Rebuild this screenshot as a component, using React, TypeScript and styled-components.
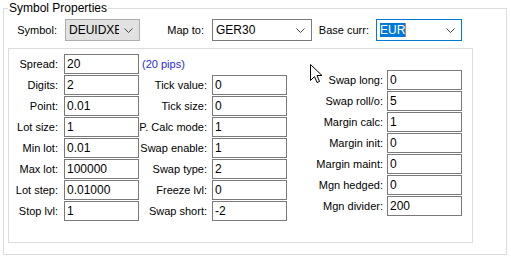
import styled, { createGlobalStyle } from "styled-components";

const GlobalStyle = createGlobalStyle`
  html, body {
    margin: 0;
    padding: 0;
    background: #ffffff;
  }
  body {
    font-family: "Liberation Sans", Arial, sans-serif;
    font-size: 11px;
    color: #000000;
  }
`;

const Page = styled.div`
  position: relative;
  width: 511px;
  height: 256px;
  padding: 8px 0 0 3px;
  box-sizing: border-box;
`;

const GroupBox = styled.div`
  position: relative;
  width: 504px;
  height: 247px;
  border: 1px solid #dcdcdc;
  box-sizing: border-box;
  padding: 10px 0 0 0;
`;

const Legend = styled.span`
  position: absolute;
  top: -8px;
  left: 4px;
  padding: 0 1px;
  background: #ffffff;
  font-size: 12px;
  line-height: 14px;
`;

const TopRow = styled.div`
  display: grid;
  grid-template-columns: 61px 75px 72px 100px 64px 86px;
  align-items: center;
  height: 22px;
`;

const Label = styled.div<{ $pad?: number }>`
  text-align: right;
  padding-right: ${({ $pad }) => $pad ?? 7}px;
  white-space: nowrap;
  line-height: 14px;
`;

const Combo = styled.div<{ $variant?: "gray" | "focused" | "plain" }>`
  position: relative;
  height: 22px;
  box-sizing: border-box;
  display: flex;
  align-items: center;
  padding-left: 3px;
  overflow: hidden;
  white-space: nowrap;
  font-size: 12px;
  background: ${({ $variant }) => ($variant === "gray" ? "#e1e1e1" : "#ffffff")};
  border: 1px solid
    ${({ $variant }) =>
      $variant === "gray" ? "#adadad" : $variant === "focused" ? "#0078d7" : "#7a7a7a"};
`;

const ComboText = styled.span<{ $clip?: boolean }>`
  flex: 1;
  overflow: hidden;
  ${({ $clip }) => ($clip ? "margin-right: 20px;" : "")}
`;

const Selected = styled.span`
  background: #0078d7;
  color: #ffffff;
  padding: 1px 0;
  border-right: 1px solid #e08040;
`;

const Chevron = styled.svg`
  position: absolute;
  right: 6px;
  top: 8px;
`;

const Panel = styled.div`
  margin: 7px 0 0 4px;
  width: 465px;
  height: 195px;
  border: 1px solid #dcdcdc;
  box-sizing: border-box;
  display: flex;
  align-items: flex-start;
`;

const Column = styled.div<{ $top: number }>`
  display: flex;
  flex-direction: column;
  gap: 1px;
  margin-top: ${({ $top }) => $top}px;
`;

const FieldRow = styled.div<{ $labelWidth: number }>`
  position: relative;
  display: grid;
  grid-template-columns: ${({ $labelWidth }) => $labelWidth}px 75px;
  align-items: center;
  height: 20px;
`;

const Input = styled.div`
  height: 20px;
  box-sizing: border-box;
  border: 1px solid #7a7a7a;
  padding-left: 2px;
  display: flex;
  align-items: center;
  font-size: 12px;
`;

const Hint = styled.span`
  position: absolute;
  left: 78px;
  top: 4px;
  color: #2a2ad8;
  font-size: 11px;
  white-space: nowrap;
`;

const Cursor = styled.svg`
  position: absolute;
  left: 310px;
  top: 64px;
`;

type Field = [string, string];

const leftFields: Field[] = [
  ["Spread:", "20"],
  ["Digits:", "2"],
  ["Point:", "0.01"],
  ["Lot size:", "1"],
  ["Min lot:", "0.01"],
  ["Max lot:", "100000"],
  ["Lot step:", "0.01000"],
  ["Stop lvl:", "1"]
];

const midFields: Field[] = [
  ["Tick value:", "0"],
  ["Tick size:", "0"],
  ["P. Calc mode:", "1"],
  ["Swap enable:", "1"],
  ["Swap type:", "2"],
  ["Freeze lvl:", "0"],
  ["Swap short:", "-2"]
];

const rightFields: Field[] = [
  ["Swap long:", "0"],
  ["Swap roll/o:", "5"],
  ["Margin calc:", "1"],
  ["Margin init:", "0"],
  ["Margin maint:", "0"],
  ["Mgn hedged:", "0"],
  ["Mgn divider:", "200"]
];

const ChevronIcon = () => (
  <Chevron width="9" height="6" viewBox="0 0 9 6">
    <path d="M0.5 0.5 L4.5 4.5 L8.5 0.5" fill="none" stroke="#444" strokeWidth="1" />
  </Chevron>
);

const FieldColumn = ({
  fields,
  top,
  labelWidth,
  pad
}: {
  fields: Field[];
  top: number;
  labelWidth: number;
  pad: number;
}) => (
  <Column $top={top}>
    {fields.map(([label, value], i) => (
      <FieldRow key={label} $labelWidth={labelWidth}>
        <Label $pad={pad}>{label}</Label>
        <Input>{value}</Input>
        {i === 0 && label === "Spread:" && <Hint style={{ left: labelWidth + 78 }}>(20 pips)</Hint>}
      </FieldRow>
    ))}
  </Column>
);

export default function App() {
  return (
    <>
      <GlobalStyle />
      <Page>
        <GroupBox>
          <Legend>Symbol Properties</Legend>
          <TopRow>
            <Label $pad={8}>Symbol:</Label>
            <Combo $variant="gray">
              <ComboText $clip>DEUIDXEUR</ComboText>
              <ChevronIcon />
            </Combo>
            <Label $pad={8}>Map to:</Label>
            <Combo $variant="plain">
              <ComboText>GER30</ComboText>
              <ChevronIcon />
            </Combo>
            <Label $pad={7}>Base curr:</Label>
            <Combo $variant="focused">
              <ComboText>
                <Selected>EUR</Selected>
              </ComboText>
              <ChevronIcon />
            </Combo>
          </TopRow>
          <Panel>
            <FieldColumn fields={leftFields} top={5} labelWidth={55} pad={6} />
            <FieldColumn fields={midFields} top={26} labelWidth={73} pad={5} />
            <FieldColumn fields={rightFields} top={21} labelWidth={100} pad={4} />
          </Panel>
        </GroupBox>
        <Cursor width="13" height="20" viewBox="0 0 13 20">
          <path
            d="M0.5 0.5 L0.5 16.5 L4.5 12.5 L7 18.5 L9.5 17.5 L7 11.5 L12 11.5 Z"
            fill="#ffffff"
            stroke="#000000"
            strokeWidth="1"
            strokeLinejoin="miter"
          />
        </Cursor>
      </Page>
    </>
  );
}
